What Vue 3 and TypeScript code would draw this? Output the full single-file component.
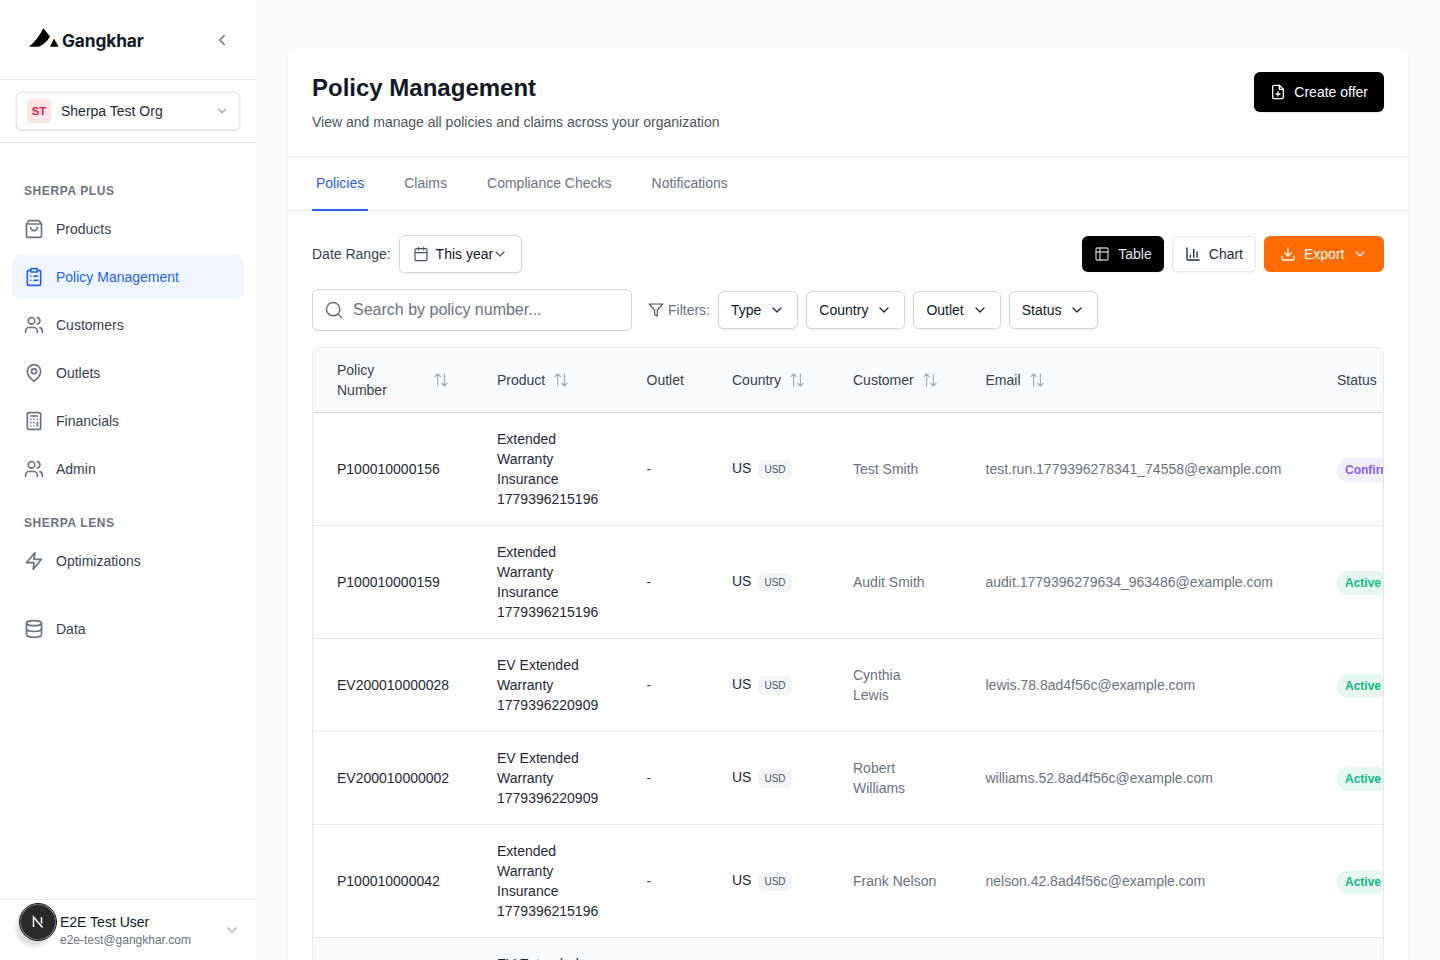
<script setup lang="ts">
interface Row {
  num: string
  product: string[]
  customer: string[]
  email: string
  status: string
}

const rows: Row[] = [
  { num: 'P100010000156', product: ['Extended', 'Warranty', 'Insurance', '1779396215196'], customer: ['Test Smith'], email: 'test.run.1779396278341_74558@example.com', status: 'Confirmed' },
  { num: 'P100010000159', product: ['Extended', 'Warranty', 'Insurance', '1779396215196'], customer: ['Audit Smith'], email: 'audit.1779396279634_963486@example.com', status: 'Active' },
  { num: 'EV200010000028', product: ['EV Extended', 'Warranty', '1779396220909'], customer: ['Cynthia', 'Lewis'], email: 'lewis.78.8ad4f56c@example.com', status: 'Active' },
  { num: 'EV200010000002', product: ['EV Extended', 'Warranty', '1779396220909'], customer: ['Robert', 'Williams'], email: 'williams.52.8ad4f56c@example.com', status: 'Active' },
  { num: 'P100010000042', product: ['Extended', 'Warranty', 'Insurance', '1779396215196'], customer: ['Frank Nelson'], email: 'nelson.42.8ad4f56c@example.com', status: 'Active' },
  { num: 'EV200010000011', product: ['EV Extended', 'Warranty', '1779396220909'], customer: ['Mary', 'Clark'], email: 'clark.11.8ad4f56c@example.com', status: 'Active' },
]

const filters = ['Type', 'Country', 'Outlet', 'Status']
const tabs = ['Policies', 'Claims', 'Compliance Checks', 'Notifications']
</script>

<template>
  <div class="app">
    <aside class="sidebar">
      <div class="brand">
        <div class="logo">
          <svg width="31" height="20" viewBox="0 0 31 20" class="mark">
            <path d="M0 18.8 C6 14 11 7 14.4 .3 L21 8.5 C18.5 13 14 17.5 9 18.8 Z" fill="#000" />
            <path d="M21 18.8 L25 10.5 L29.6 18.8 Z" fill="#000" />
          </svg>
          <span class="wordmark">Gangkhar</span>
        </div>
        <svg class="collapse" width="18" height="18" viewBox="0 0 24 24"><path d="M15 18l-6-6 6-6" /></svg>
      </div>

      <div class="org-wrap">
        <div class="org">
          <span class="org-badge">ST</span>
          <span class="org-name">Sherpa Test Org</span>
          <svg class="org-chev" width="14" height="14" viewBox="0 0 24 24"><path d="M6 9l6 6 6-6" /></svg>
        </div>
      </div>

      <nav class="nav">
        <div class="nav-label">SHERPA PLUS</div>
        <a class="nav-item">
          <svg class="ni" viewBox="0 0 24 24"><path d="M6 2L3 6v14a2 2 0 0 0 2 2h14a2 2 0 0 0 2-2V6l-3-4Z" /><path d="M3 6h18" /><path d="M16 10a4 4 0 0 1-8 0" /></svg>
          Products
        </a>
        <a class="nav-item active">
          <svg class="ni" viewBox="0 0 24 24"><rect x="8" y="2" width="8" height="4" rx="1" /><path d="M16 4h2a2 2 0 0 1 2 2v14a2 2 0 0 1-2 2H6a2 2 0 0 1-2-2V6a2 2 0 0 1 2-2h2" /><path d="M12 11h4M12 16h4M8 11h.01M8 16h.01" /></svg>
          Policy Management
        </a>
        <a class="nav-item">
          <svg class="ni" viewBox="0 0 24 24"><circle cx="9" cy="7" r="4" /><path d="M2 21v-2a4 4 0 0 1 4-4h6a4 4 0 0 1 4 4v2" /><path d="M16 3.13a4 4 0 0 1 0 7.75" /><path d="M22 21v-2a4 4 0 0 0-3-3.87" /></svg>
          Customers
        </a>
        <a class="nav-item">
          <svg class="ni" viewBox="0 0 24 24"><path d="M20 10c0 6-8 12-8 12s-8-6-8-12a8 8 0 0 1 16 0Z" /><circle cx="12" cy="10" r="3" /></svg>
          Outlets
        </a>
        <a class="nav-item">
          <svg class="ni" viewBox="0 0 24 24"><rect x="4" y="2" width="16" height="20" rx="2" /><path d="M8 6h8" /><path d="M16 14v4" /><path d="M8 10h.01M12 10h.01M16 10h.01M8 14h.01M12 14h.01M8 18h.01M12 18h.01" /></svg>
          Financials
        </a>
        <a class="nav-item">
          <svg class="ni" viewBox="0 0 24 24"><circle cx="9" cy="7" r="4" /><path d="M2 21v-2a4 4 0 0 1 4-4h6a4 4 0 0 1 4 4v2" /><path d="M16 3.13a4 4 0 0 1 0 7.75" /><path d="M22 21v-2a4 4 0 0 0-3-3.87" /></svg>
          Admin
        </a>
        <div class="nav-label second">SHERPA LENS</div>
        <a class="nav-item">
          <svg class="ni" viewBox="0 0 24 24"><path d="M13 2L3 14h9l-1 8 10-12h-9l1-8Z" /></svg>
          Optimizations
        </a>
        <a class="nav-item data">
          <svg class="ni" viewBox="0 0 24 24"><ellipse cx="12" cy="5" rx="9" ry="3" /><path d="M3 5v14c0 1.66 4 3 9 3s9-1.34 9-3V5" /><path d="M3 12c0 1.66 4 3 9 3s9-1.34 9-3" /></svg>
          Data
        </a>
      </nav>

      <div class="user">
        <div class="user-text">
          <div class="user-name">E2E Test User</div>
          <div class="user-mail">e2e-test@gangkhar.com</div>
        </div>
        <svg class="user-chev" width="16" height="16" viewBox="0 0 24 24"><path d="M6 9l6 6 6-6" /></svg>
        <div class="dev-badge">
          <svg width="16" height="16" viewBox="0 0 16 16"><path d="M3.5 13V3l9 10.5M11.5 3v6.5" /></svg>
        </div>
      </div>
    </aside>

    <main class="main">
      <section class="card">
        <header class="head">
          <div>
            <h1 class="title">Policy Management</h1>
            <p class="sub">View and manage all policies and claims across your organization</p>
          </div>
          <button class="btn-create">
            <svg class="bi" viewBox="0 0 24 24"><path d="M14 2H6a2 2 0 0 0-2 2v16a2 2 0 0 0 2 2h12a2 2 0 0 0 2-2V8Z" /><path d="M14 2v6h6" /><path d="M12 18v-6M9 15h6" /></svg>
            Create offer
          </button>
        </header>

        <div class="tabs">
          <span v-for="(t, i) in tabs" :key="t" class="tab" :class="{ on: i === 0 }">{{ t }}</span>
        </div>

        <div class="body">
          <div class="toolbar">
            <div class="range">
              <span class="range-label">Date Range:</span>
              <button class="date-btn">
                <svg class="cal" viewBox="0 0 24 24"><path d="M8 2v4M16 2v4" /><rect x="3" y="4" width="18" height="18" rx="2" /><path d="M3 10h18" /></svg>
                <span class="nowrap">This year</span>
                <svg class="date-chev" viewBox="0 0 24 24"><path d="M6 9l6 6 6-6" /></svg>
              </button>
            </div>
            <div class="actions">
              <button class="view on">
                <svg class="bi tbl" viewBox="0 0 24 24"><rect x="3" y="3" width="18" height="18" rx="2" /><path d="M3 9h18M9 3v18" /></svg>
                Table
              </button>
              <button class="view">
                <svg class="bi" viewBox="0 0 24 24"><path d="M3 3v16a2 2 0 0 0 2 2h16" /><path d="M8 17v-3M13 17V5M18 17V9" /></svg>
                Chart
              </button>
              <button class="export">
                <svg class="bi" viewBox="0 0 24 24"><path d="M21 15v4a2 2 0 0 1-2 2H5a2 2 0 0 1-2-2v-4" /><path d="M7 10l5 5 5-5" /><path d="M12 15V3" /></svg>
                Export
                <svg class="bi" viewBox="0 0 24 24"><path d="M6 9l6 6 6-6" /></svg>
              </button>
            </div>
          </div>

          <div class="filterbar">
            <div class="search">
              <svg class="search-ico" viewBox="0 0 24 24"><circle cx="11" cy="11" r="8" /><path d="M21 21l-4.3-4.3" /></svg>
              <span>Search by policy number...</span>
            </div>
            <div class="filters-label">
              <svg class="funnel" viewBox="0 0 24 24"><path d="M22 3H2l8 9.46V19l4 2v-8.54L22 3Z" /></svg>
              Filters:
            </div>
            <button v-for="f in filters" :key="f" class="filter">
              {{ f }}
              <svg class="filter-chev" viewBox="0 0 24 24"><path d="M6 9l6 6 6-6" /></svg>
            </button>
          </div>

          <div class="table-box">
            <table class="table">
              <colgroup>
                <col class="c1" /><col class="c2" /><col class="c3" /><col class="c4" /><col class="c5" /><col class="c6" /><col class="c7" />
              </colgroup>
              <thead>
                <tr>
                  <th>
                    <div class="th first">
                      <span class="th-wrap">Policy Number</span>
                      <svg class="sort" viewBox="0 0 24 24"><path d="M7 21V3M3 7l4-4 4 4" /><path d="M17 3v18M13 17l4 4 4-4" /></svg>
                    </div>
                  </th>
                  <th><div class="th">Product<svg class="sort" viewBox="0 0 24 24"><path d="M7 21V3M3 7l4-4 4 4" /><path d="M17 3v18M13 17l4 4 4-4" /></svg></div></th>
                  <th><div class="th">Outlet</div></th>
                  <th><div class="th">Country<svg class="sort" viewBox="0 0 24 24"><path d="M7 21V3M3 7l4-4 4 4" /><path d="M17 3v18M13 17l4 4 4-4" /></svg></div></th>
                  <th><div class="th">Customer<svg class="sort" viewBox="0 0 24 24"><path d="M7 21V3M3 7l4-4 4 4" /><path d="M17 3v18M13 17l4 4 4-4" /></svg></div></th>
                  <th><div class="th">Email<svg class="sort" viewBox="0 0 24 24"><path d="M7 21V3M3 7l4-4 4 4" /><path d="M17 3v18M13 17l4 4 4-4" /></svg></div></th>
                  <th><div class="th">Status</div></th>
                </tr>
              </thead>
              <tbody>
                <tr v-for="(r, i) in rows" :key="r.num" :class="{ alt: i === 5 }">
                  <td class="dark">{{ r.num }}</td>
                  <td class="dark"><div v-for="p in r.product" :key="p">{{ p }}</div></td>
                  <td class="mid">-</td>
                  <td class="dark"><span class="country">US</span><span class="usd">USD</span></td>
                  <td class="gray"><div v-for="c in r.customer" :key="c">{{ c }}</div></td>
                  <td class="gray">{{ r.email }}</td>
                  <td><span class="pill" :class="r.status === 'Active' ? 'green' : 'purple'">{{ r.status }}</span></td>
                </tr>
              </tbody>
            </table>
          </div>
        </div>
      </section>
    </main>
  </div>
</template>

<style>
html, body { margin: 0; padding: 0; height: 100%; overflow: hidden; }
</style>

<style scoped>
* { box-sizing: border-box; }
svg { fill: none; stroke: currentColor; stroke-width: 2; stroke-linecap: round; stroke-linejoin: round; flex: none; }
button { font: inherit; cursor: pointer; }

.app {
  display: flex;
  height: 960px;
  overflow: hidden;
  font-family: "Liberation Sans", Arial, sans-serif;
  font-size: 14px;
  line-height: 20px;
  color: #111827;
  background: #f9fafb;
}
.nowrap { white-space: nowrap; }

.sidebar {
  width: 256px;
  flex: none;
  display: flex;
  flex-direction: column;
  background: #fff;
}
.brand {
  height: 80px;
  border-bottom: 1px solid #e5e7eb;
  display: flex;
  align-items: center;
  justify-content: space-between;
  padding: 0 25px 0 29px;
}
.logo { display: flex; align-items: center; gap: 2px; margin-top: 1px; }
.mark { stroke: none; margin-top: -5px; }
.mark path { stroke: none; }
.wordmark { font-family: Inter, "Liberation Sans", sans-serif; font-size: 17.3px; font-weight: 700; color: #111827; line-height: 24px; margin-top: 2px; letter-spacing: -0.1px; }
.collapse { color: #6b7280; stroke-width: 2; }

.org-wrap { padding: 12px 16px; border-bottom: 1px solid #e5e7eb; height: 63px; }
.org {
  height: 38px;
  display: flex;
  align-items: center;
  padding: 0 10px;
  border: 1px solid #e5e7eb;
  border-radius: 6px;
  background: #fff;
  box-shadow: 0 1px 3px rgba(0, 0, 0, 0.12);
}
.org-badge {
  width: 24px;
  height: 24px;
  border-radius: 4px;
  background: #ffe4e6;
  color: #e11d48;
  font-size: 11.5px;
  font-weight: 700;
  display: flex;
  align-items: center;
  justify-content: center;
  padding-bottom: 1px;
}
.org-name { margin-left: 10px; flex: 1; color: #1f2937; }
.org-chev { color: #9ca3af; }

.nav { padding: 40px 12px 0; display: flex; flex-direction: column; flex: 1; }
.nav-label {
  font-size: 12px;
  line-height: 16px;
  font-weight: 700;
  letter-spacing: 0.6px;
  color: #6b7280;
  padding-left: 12px;
  margin-bottom: 8px;
}
.nav-label.second { margin-top: 20px; margin-bottom: 8px; }
.nav-item {
  height: 44px;
  display: flex;
  align-items: center;
  gap: 12px;
  padding: 0 12px;
  border-radius: 8px;
  color: #374151;
  margin-bottom: 4px;
}
.nav-item.active { background: #eff6ff; color: #2563eb; }
.nav-item.data { margin-top: 20px; }
.ni { width: 20px; height: 20px; color: #6b7280; stroke-width: 2; }
.active .ni { color: #2563eb; }

.user {
  position: relative;
  height: 61px;
  border-top: 1px solid #e5e7eb;
  display: flex;
  align-items: center;
  padding: 0 16px 0 60px;
}
.user-text { flex: 1; margin-top: -1px; }
.user-name { color: #111827; line-height: 20px; }
.user-mail { color: #6b7280; font-size: 12px; line-height: 16px; }
.user-chev { color: #9ca3af; stroke-width: 1.6; }
.dev-badge {
  position: absolute;
  left: 20px;
  top: 4px;
  width: 36px;
  height: 36px;
  border-radius: 50%;
  background: #2a2a2a;
  border: 1px solid #666;
  outline: 1px solid #111;
  color: #fff;
  display: flex;
  align-items: center;
  justify-content: center;
  box-shadow: -4px 6px 4px rgba(0, 0, 0, 0.14);
}
.dev-badge svg { stroke-width: 1.5; stroke-linecap: butt; stroke-linejoin: miter; }

.main { flex: 1; min-width: 0; padding: 48px 32px 0; }
.card {
  background: #fff;
  border-radius: 8px 8px 0 0;
  box-shadow: 0 1px 3px rgba(0, 0, 0, 0.08);
  height: 960px;
}
.head {
  height: 109px;
  padding: 24px;
  border-bottom: 1px solid #e5e7eb;
  display: flex;
  justify-content: space-between;
  align-items: flex-start;
}
.title { margin: 0; font-size: 24px; line-height: 32px; font-weight: 700; color: #111827; }
.sub { margin: 8px 0 0; color: #4b5563; line-height: 20px; }
.btn-create {
  height: 40px;
  padding: 0 16px;
  display: flex;
  align-items: center;
  gap: 8px;
  background: #000;
  color: #fff;
  border: 0;
  border-radius: 6px;
  box-shadow: 0 1px 2px rgba(0, 0, 0, 0.1);
}
.bi { width: 16px; height: 16px; }

.tabs {
  height: 54px;
  padding: 0 24px;
  border-bottom: 1px solid #e5e7eb;
  display: flex;
  gap: 32px;
}
.tab {
  height: 54px;
  padding: 0 4px;
  display: flex;
  align-items: center;
  color: #6b7280;
  border-bottom: 2px solid transparent;
}
.tab.on { color: #2563eb; border-bottom-color: #2563eb; }

.body { padding: 24px; }
.toolbar { display: flex; justify-content: space-between; align-items: center; height: 38px; }
.range { display: flex; align-items: center; gap: 8px; }
.range-label { color: #374151; }
.date-btn {
  height: 38px;
  display: flex;
  align-items: center;
  padding: 0 13px;
  background: #fff;
  color: #111827;
  border: 1px solid #d1d5db;
  border-radius: 6px;
  box-shadow: 0 1px 2px rgba(0, 0, 0, 0.08);
}
.cal { width: 16px; height: 16px; color: #4b5563; stroke-width: 1.8; margin-right: 7px; }
.date-chev { width: 16px; height: 16px; color: #4b5563; stroke-width: 1.8; margin-left: -1px; }
.actions { display: flex; gap: 8px; }
.view {
  height: 36px;
  padding: 0 12px;
  display: flex;
  align-items: center;
  gap: 8px;
  background: #fff;
  color: #1f2937;
  border: 1px solid #e5e7eb;
  border-radius: 6px;
  box-shadow: 0 1px 2px rgba(0, 0, 0, 0.06);
}
.view.on { background: #000; color: #e5e7eb; border: 0; }
.tbl { opacity: 0.8; }
.export {
  height: 36px;
  width: 120px;
  padding: 0 16px;
  display: flex;
  align-items: center;
  gap: 8px;
  background: #ff6b00;
  color: #fff;
  border: 0;
  border-radius: 6px;
}

.filterbar { margin-top: 16px; display: flex; align-items: center; gap: 8px; height: 42px; }
.search {
  width: 320px;
  height: 42px;
  display: flex;
  align-items: center;
  gap: 9px;
  padding: 0 11px;
  border: 1px solid #d1d5db;
  border-radius: 6px;
  color: #6b7280;
  font-size: 16px;
  box-shadow: 0 1px 2px rgba(0, 0, 0, 0.06);
}
.search-ico { width: 20px; height: 20px; color: #6b7280; stroke-width: 1.8; }
.filters-label {
  margin-left: 8px;
  display: flex;
  align-items: center;
  gap: 4px;
  color: #6b7280;
}
.funnel { width: 16px; height: 16px; color: #4b5563; stroke-width: 1.8; }
.filter {
  height: 38px;
  padding: 0 12px;
  display: flex;
  align-items: center;
  gap: 8px;
  background: #fff;
  color: #111827;
  border: 1px solid #d1d5db;
  border-radius: 6px;
  box-shadow: 0 1px 2px rgba(0, 0, 0, 0.08);
}
.filter-chev { width: 16px; height: 16px; color: #1f2937; }

.table-box {
  margin-top: 16px;
  border: 1px solid #e5e7eb;
  border-radius: 8px;
  overflow: hidden;
  box-shadow: 0 1px 2px rgba(0, 0, 0, 0.05);
}
.table { border-collapse: separate; border-spacing: 0; table-layout: fixed; width: 1160px; }
.c1 { width: 160px; }
.c2 { width: 149.5px; }
.c3 { width: 85.5px; }
.c4 { width: 121px; }
.c5 { width: 132.5px; }
.c6 { width: 351.5px; }
.c7 { width: 160px; }
th {
  height: 65px;
  background: #f9fafb;
  border-bottom: 1px solid #d1d5db;
  padding: 0 0 0 24px;
  font-weight: 400;
  text-align: left;
  color: #374151;
}
.th { display: flex; align-items: center; gap: 8px; }
.th.first { justify-content: space-between; padding-right: 24px; }
.th-wrap { width: 60px; }
.sort { width: 16px; height: 16px; color: #9ca3af; stroke-width: 1.6; }
td { padding: 16px 0 16px 24px; border-bottom: 1px solid #e5e7eb; vertical-align: middle; background: #fff; }
.alt td { background: #f9fafb; }
.dark { color: #1f2937; }
.mid { color: #374151; }
.gray { color: #6b7280; }
.country { position: relative; top: -1px; }
.usd {
  display: inline-block;
  position: relative;
  top: -1px;
  margin-left: 7px;
  padding: 0 6px;
  height: 19px;
  line-height: 19px;
  border-radius: 6px;
  background: #f3f4f6;
  color: #4b5563;
  font-size: 10px;
}
.pill {
  display: inline-block;
  position: relative;
  top: 1px;
  padding: 2px 8px;
  height: 24px;
  border-radius: 12px;
  font-size: 12px;
  font-weight: 700;
}
.green { background: #e7f8f1; color: #10b981; }
.purple { background: #f3eefe; color: #8b5cf6; }
</style>
